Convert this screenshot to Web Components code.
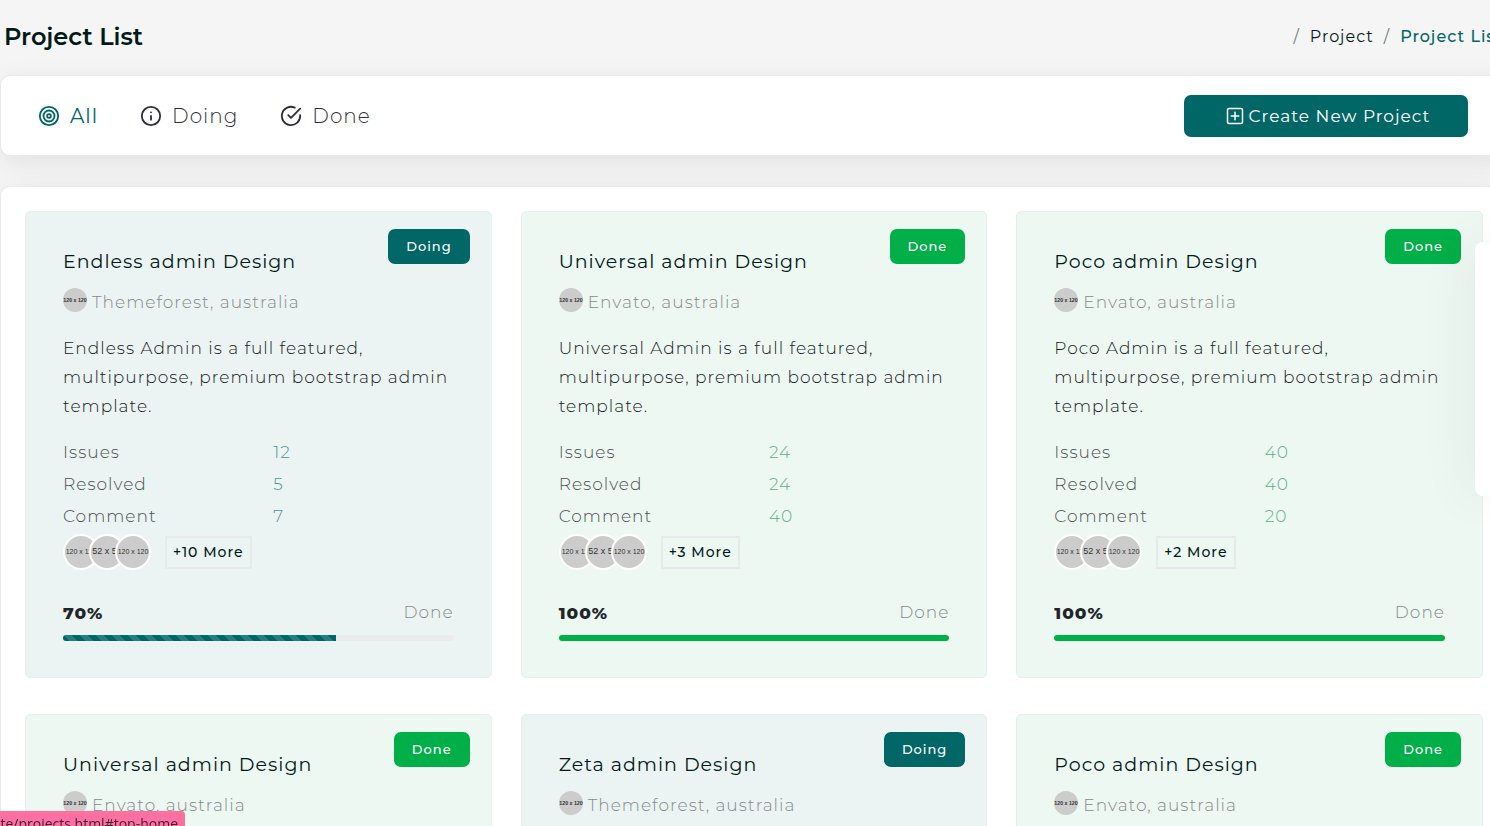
<!DOCTYPE html>
<html lang="en">
<head>
<meta charset="utf-8">
<title>Project List</title>
<style>
  :root {
    --primary: #006666;
    --success: #00af48;
    --ink: #011a18;
    --border: #e8e9ec;
    --panel-shadow: 0 8px 28px rgba(40, 40, 60, .09);
  }
  html { scrollbar-width: none; }
  body {
    margin: 0;
    overflow-x: hidden;
    background: #f5f5f5;
    color: #212529;
    font-family: Montserrat, Inter, "Open Sans", sans-serif;
    font-size: 17px;
    letter-spacing: 1px;
  }
</style>
</head>
<body>
<project-page></project-page>

<script>
function define(name, html, setup) {
  const tpl = document.createElement('template');
  tpl.innerHTML = html;
  customElements.define(name, class extends HTMLElement {
    connectedCallback() {
      if (this.shadowRoot) return;
      this.attachShadow({ mode: 'open' }).append(tpl.content.cloneNode(true));
      if (setup) setup(this, this.shadowRoot);
    }
  });
}

define('image-avatar', `
<style>
  :host { display: block; width: 24px; height: 24px; flex: none; border-radius: 50%; overflow: hidden; background: #ccc; letter-spacing: normal; }
  :host([ring]) { width: 32px; height: 32px; border: 2px solid #fff; }
  svg { display: block; width: 100%; height: 100%; }
  text { font-family: "Liberation Sans", sans-serif; fill: #333; text-anchor: middle; }
</style>
<svg viewBox="0 0 32 32" role="img" aria-label="Member"><text x="16" y="18"></text></svg>`,
(host, root) => {
  const t = root.querySelector('text');
  t.textContent = host.getAttribute('label');
  t.style.fontSize = host.getAttribute('label').length > 8 ? '7px' : '9px';
  t.style.fontWeight = host.hasAttribute('ring') ? '400' : '700';
});

define('page-header', `
<style>
  :host { display: flex; justify-content: space-between; align-items: center; height: 74px; padding: 0 5px 0 4px; }
  h1 { margin: 0; font-size: 24px; line-height: 32px; font-weight: 600; letter-spacing: normal; color: var(--ink); }
  ol { display: flex; gap: 10px; margin: 0; padding: 0; list-style: none; font-size: 16px; line-height: 24px; }
  li { display: flex; gap: 10px; }
  li::before { content: "/"; color: #6c757d; }
  a { color: var(--ink); text-decoration: none; }
  a[aria-current] { color: var(--primary); font-weight: 500; }
</style>
<h1>Project List</h1>
<nav aria-label="Breadcrumb"><ol>
  <li><a href="#project">Project</a></li>
  <li><a href="#list" aria-current="page">Project List</a></li>
</ol></nav>`);

define('filter-tab', `
<style>
  :host { display: block; }
  a { display: flex; align-items: center; gap: 10px; color: #2f2f3b; font-size: 20px; line-height: 30px; font-weight: 300; text-decoration: none; }
  :host([active]) a { color: var(--primary); font-weight: 400; }
  ::slotted(svg) { width: 22px; height: 22px; fill: none; stroke: currentColor; stroke-width: 2; stroke-linecap: round; stroke-linejoin: round; }
</style>
<a href="#filter"><slot name="icon"></slot><slot></slot></a>`);

define('project-toolbar', `
<style>
  :host { display: flex; justify-content: space-between; align-items: center; box-sizing: border-box; min-height: 81px; padding: 1px 39px 0 37px; border: 1px solid var(--border); border-radius: 10px; background: #fff; box-shadow: var(--panel-shadow); }
  nav { display: flex; gap: 42px; }
  button { display: flex; align-items: center; justify-content: center; gap: 5px; min-width: 284px; height: 42px; padding: 0 34px 0 38px; border: 0; border-radius: 7px; background: var(--primary); color: #fff; font: inherit; letter-spacing: inherit; }
  button svg { width: 18px; height: 18px; fill: none; stroke: currentColor; stroke-width: 2; stroke-linecap: round; stroke-linejoin: round; }
</style>
<nav aria-label="Filter projects">
  <filter-tab active><svg slot="icon" viewBox="0 0 24 24"><circle cx="12" cy="12" r="10"/><circle cx="12" cy="12" r="6"/><circle cx="12" cy="12" r="2"/></svg>All</filter-tab>
  <filter-tab><svg slot="icon" viewBox="0 0 24 24"><circle cx="12" cy="12" r="10"/><path d="M12 16v-4M12 8h.01"/></svg>Doing</filter-tab>
  <filter-tab><svg slot="icon" viewBox="0 0 24 24"><path d="M22 11.08V12a10 10 0 1 1-5.93-9.14"/><path d="M22 4 12 14.01l-3-3"/></svg>Done</filter-tab>
</nav>
<button type="button"><svg viewBox="0 0 24 24"><rect x="2" y="2" width="20" height="20" rx="2"/><path d="M12 7v10M7 12h10"/></svg>Create New Project</button>`);

define('project-card', `
<style>
  :host { display: block; position: relative; box-sizing: border-box; padding: 36px 37px 36px; border: 1px solid #e9eeec; border-radius: 5px; background: #ecf4f3; --accent: var(--primary); --figure: #4d9494; }
  :host([status="Done"]) { background: #eef8f3; --accent: var(--success); --figure: #5eae86; }
  .badge { position: absolute; top: 17px; right: 21px; padding: 0 18px; border-radius: 7px; background: var(--accent); color: #fff; font-size: 13px; line-height: 35px; font-weight: 500; }
  h2 { margin: 0 0 12px; color: var(--ink); font-size: 19px; line-height: 28px; font-weight: 400; }
  .client { display: flex; align-items: center; gap: 5px; height: 28px; margin-bottom: 18px; color: #858b8a; font-weight: 300; }
  .client image-avatar { align-self: flex-start; }
  p { margin: 0 0 15px; line-height: 29px; color: #16191c; font-weight: 300; }
  dl { display: grid; grid-template-columns: 1fr 1fr; margin: 0 -30px 2px 0; line-height: 32px; font-weight: 300; color: #4a5250; }
  dd { margin: 0; color: var(--figure); }
  .team { display: flex; align-items: center; margin-bottom: 28px; }
  .team image-avatar + image-avatar { margin-left: -10px; }
  .more { margin-left: 14px; padding: 0 6px; border: 2px solid var(--border); color: var(--ink); font-size: 14px; line-height: 29px; font-weight: 500; }
  .progress-label { display: flex; justify-content: space-between; margin-bottom: 7px; line-height: 28px; }
  .progress-label b { font-weight: 800; line-height: 30px; }
  .progress-label span { color: #858b8a; font-weight: 300; }
  .bar { height: 6px; overflow: hidden; border-radius: 3px; background: #e9ebec; }
  .fill { height: 100%; background-color: var(--accent); }
  :host([status="Doing"]) .fill { background-image: linear-gradient(45deg, rgba(255,255,255,.15) 25%, transparent 25%, transparent 50%, rgba(255,255,255,.15) 50%, rgba(255,255,255,.15) 75%, transparent 75%); background-size: 16px 16px; }
</style>
<span class="badge"></span>
<h2></h2>
<div class="client"><image-avatar label="120 x 120"></image-avatar><span></span></div>
<p><slot></slot></p>
<dl>
  <dt>Issues</dt><dd></dd>
  <dt>Resolved</dt><dd></dd>
  <dt>Comment</dt><dd></dd>
</dl>
<div class="team">
  <image-avatar ring label="120 x 120"></image-avatar>
  <image-avatar ring label="52 x 52"></image-avatar>
  <image-avatar ring label="120 x 120"></image-avatar>
  <span class="more"></span>
</div>
<div class="progress-label"><b></b><span>Done</span></div>
<div class="bar" role="progressbar" aria-label="Progress" aria-valuemin="0" aria-valuemax="100"><div class="fill"></div></div>`,
(host, root) => {
  const get = n => host.getAttribute(n);
  root.querySelector('.badge').textContent = get('status');
  root.querySelector('h2').textContent = get('name');
  root.querySelector('.client span').textContent = get('client') + ', australia';
  const figures = get('figures').split(' ');
  root.querySelectorAll('dd').forEach((dd, i) => { dd.textContent = figures[i]; });
  root.querySelector('.more').textContent = '+' + get('more') + ' More';
  root.querySelector('.progress-label b').textContent = get('progress') + '%';
  root.querySelector('.bar').setAttribute('aria-valuenow', get('progress'));
  root.querySelector('.fill').style.width = get('progress') + '%';
});

define('project-grid', `
<style>
  :host { display: grid; grid-template-columns: repeat(3, minmax(0, 1fr)); gap: 36px 29px; padding: 24px; border: 1px solid var(--border); border-radius: 10px; background: #fff; box-shadow: var(--panel-shadow); }
</style>
<slot></slot>`);

define('side-panel', `
<style>
  :host { position: fixed; top: 242px; right: 0; width: 15px; height: 254px; border-radius: 8px 0 0 8px; background: #fff; box-shadow: 0 0 50px rgba(0, 50, 50, .14); }
</style>`);

define('link-status', `
<style>
  :host { position: fixed; left: 0; bottom: 0; display: flex; justify-content: flex-end; box-sizing: border-box; width: 185px; height: 15px; padding-right: 7px; overflow: hidden; border-radius: 0 4px 0 0; background: #ff6fa0; color: #3b2430; font: 14px/25px "Open Sans", sans-serif; letter-spacing: normal; white-space: nowrap; }
</style>
<slot></slot>`);

define('project-page', `
<style>
  :host { display: block; width: calc(100% + 18px); padding-bottom: 30px; }
  main { display: grid; gap: 30px; padding-top: 1px; }
</style>
<page-header></page-header>
<main>
  <project-toolbar></project-toolbar>
  <project-grid>
    <project-card status="Doing" name="Endless admin Design" client="Themeforest" figures="12 5 7" more="10" progress="70">Endless Admin is a full featured, multipurpose, premium bootstrap admin template.</project-card>
    <project-card status="Done" name="Universal admin Design" client="Envato" figures="24 24 40" more="3" progress="100">Universal Admin is a full featured, multipurpose, premium bootstrap admin template.</project-card>
    <project-card status="Done" name="Poco admin Design" client="Envato" figures="40 40 20" more="2" progress="100">Poco Admin is a full featured, multipurpose, premium bootstrap admin template.</project-card>
    <project-card status="Done" name="Universal admin Design" client="Envato" figures="24 24 40" more="3" progress="100">Universal Admin is a full featured, multipurpose, premium bootstrap admin template.</project-card>
    <project-card status="Doing" name="Zeta admin Design" client="Themeforest" figures="12 5 7" more="10" progress="70">Zeta Admin is a full featured, multipurpose, premium bootstrap admin template.</project-card>
    <project-card status="Done" name="Poco admin Design" client="Envato" figures="40 40 20" more="2" progress="100">Poco Admin is a full featured, multipurpose, premium bootstrap admin template.</project-card>
  </project-grid>
</main>
<side-panel></side-panel>
<link-status>ate/projects.html#top-home</link-status>`);
</script>
</body>
</html>
